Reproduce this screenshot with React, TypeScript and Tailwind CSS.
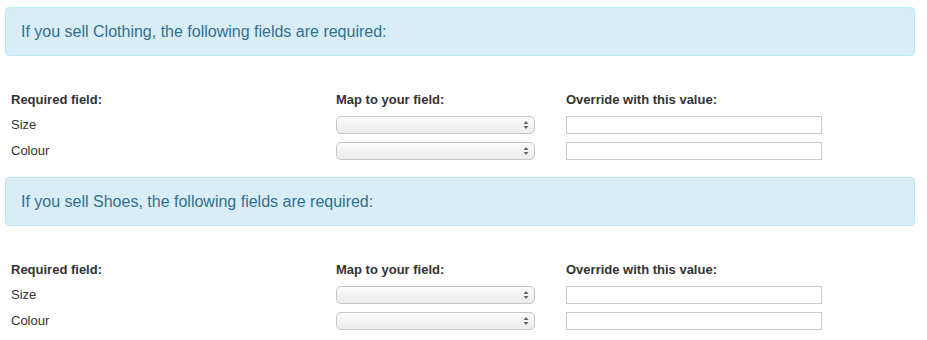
import React from 'react';

const sections = ['Clothing', 'Shoes'];
const fields = ['Size', 'Colour'];

export default function App() {
    return (
        <div className="w-[927px] h-[340px] bg-white text-[#333] pt-[7px]" style={{ fontFamily: '"Liberation Sans", Arial, sans-serif' }}>
            {sections.map((name, i) => (
                <div key={name} className={i > 0 ? 'mt-[13px]' : ''}>
                    {/* Alert */}
                    <div className="ml-[5px] w-[910px] h-[49px] flex items-center px-[15px] bg-[#d9edf7] border border-[#bce8f1] rounded-[4px] text-[#31708f] text-[16px]">
                        If you sell {name}, the following fields are required:
                    </div>

                    {/* Field mapping table */}
                    <div className="mt-[32px] pl-[11px] grid grid-cols-[325px_230px_1fr] text-[13px]">
                        <div className="h-[24px] flex items-center font-bold">Required field:</div>
                        <div className="h-[24px] flex items-center font-bold">Map to your field:</div>
                        <div className="h-[24px] flex items-center font-bold">Override with this value:</div>
                        {fields.map(f => (
                            <React.Fragment key={f}>
                                <div className="h-[26px] flex items-center">{f}</div>
                                <div className="h-[26px] flex items-center">
                                    <SelectBox />
                                </div>
                                <div className="h-[26px] flex items-center">
                                    <div className="w-[256px] h-[18px] border border-[#c9c9c9] bg-white" />
                                </div>
                            </React.Fragment>
                        ))}
                    </div>
                </div>
            ))}
        </div>
    );
}

function SelectBox() {
    return (
        <div className="w-[199px] h-[18px] rounded-[5px] border border-[#c6c6c6] bg-gradient-to-b from-[#fbfbfb] to-[#ececec] flex items-center justify-end pr-[5px]">
            <svg width="6" height="10" viewBox="0 0 6 10">
                <path d="M3 1 L5.5 4 L0.5 4 Z" fill="#666" />
                <path d="M3 9 L5.5 6 L0.5 6 Z" fill="#666" />
            </svg>
        </div>
    );
}
